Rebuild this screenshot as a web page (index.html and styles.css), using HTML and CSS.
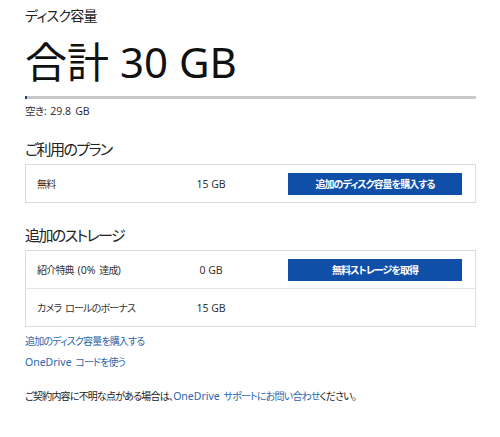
FILE: index.html
```html
<!DOCTYPE html>
<html lang="ja">
<head>
<meta charset="utf-8">
<link rel="stylesheet" href="styles.css">
</head>
<body>
<main class="page">
  <h2 class="title">ディスク容量</h2>
  <div class="total">合計 30 GB</div>
  <div class="meter"><div class="meter-used" style="width:2px"></div></div>
  <div class="free">空き: <span class="en">29.8 GB</span></div>

  <h3 class="section">ご利用のプラン</h3>
  <div class="box">
    <div class="row">
      <span class="label">無料</span>
      <span class="value">15 GB</span>
      <button class="btn">追加のディスク容量を購入する</button>
    </div>
  </div>

  <h3 class="section">追加のストレージ</h3>
  <div class="box">
    <div class="row">
      <span class="label">紹介特典 <span class="en">(0%</span> 達成)</span>
      <span class="value">0 GB</span>
      <button class="btn">無料ストレージを取得</button>
    </div>
    <div class="row">
      <span class="label">カメラ ロールのボーナス</span>
      <span class="value">15 GB</span>
    </div>
  </div>

  <nav class="links">
    <a class="link" href="#">追加のディスク容量を購入する</a>
    <a class="link" href="#"><span class="en">OneDrive</span> コードを使う</a>
  </nav>

  <p class="footer">ご契約内容に不明な点がある場合は、<a class="link inline" href="#"><span class="en">OneDrive</span> サポートにお問い合わせ</a>ください。</p>
</main>
</body>
</html>
```
FILE: styles.css
```css
html, body {
  margin: 0;
  padding: 0;
  background: #fff;
}
body {
  font-family: "Noto Sans", "Noto Sans CJK JP", sans-serif;
  color: #333;
  font-feature-settings: "palt";
}
.page {
  width: 451px;
  padding: 7px 0 0 25px;
  display: flex;
  flex-direction: column;
}
.en {
  letter-spacing: 0;
  font-size: 10.5px;
}
.title {
  margin: 0;
  font-size: 14px;
  font-weight: normal;
  line-height: 18px;
  letter-spacing: -0.7px;
  color: #222;
}
.total {
  margin-top: 15px;
  font-size: 42px;
  line-height: 44px;
  color: #111;
}
.meter {
  margin-top: 12px;
  height: 3px;
  background: #c8c8c8;
  display: flex;
}
.meter-used {
  background: #1e3f75;
  height: 3px;
}
.free {
  margin-top: 5px;
  font-size: 10.5px;
  line-height: 14px;
  letter-spacing: -0.4px;
  word-spacing: 1.5px;
}
.section {
  margin: 21px 0 0;
  font-size: 15px;
  font-weight: normal;
  line-height: 20px;
  letter-spacing: -1.6px;
  color: #222;
}
.box {
  margin-top: 5px;
  border: 1px solid #dcdcdc;
}
.box + .section {
  margin-top: 22px;
}
.row {
  height: 37px;
  display: grid;
  grid-template-columns: 133px 82px 1fr;
  align-items: center;
  padding: 0 13px 0 11px;
  font-size: 10px;
  letter-spacing: -0.8px;
  word-spacing: 2px;
}
.row + .row {
  border-top: 1px solid #e4e4e4;
}
.value {
  text-align: center;
  font-size: 10.5px;
  letter-spacing: 0;
  word-spacing: 0;
}
.btn {
  justify-self: end;
  width: 174px;
  height: 22px;
  border: 0;
  background: #0f4fa8;
  color: #fff;
  font-family: inherit;
  font-feature-settings: "palt";
  font-size: 10px;
  font-weight: bold;
  letter-spacing: -1px;
  padding: 0;
}
.links {
  margin-top: 7px;
  display: flex;
  flex-direction: column;
  gap: 7px;
}
.link {
  color: #2b67ae;
  text-decoration: none;
  font-size: 10px;
  line-height: 14px;
  letter-spacing: -0.85px;
  word-spacing: 2px;
}
.footer {
  margin: 20px 0 0;
  font-size: 10px;
  line-height: 14px;
  letter-spacing: -0.8px;
  color: #222;
}
.link.inline {
  font-size: inherit;
  letter-spacing: inherit;
}
```
